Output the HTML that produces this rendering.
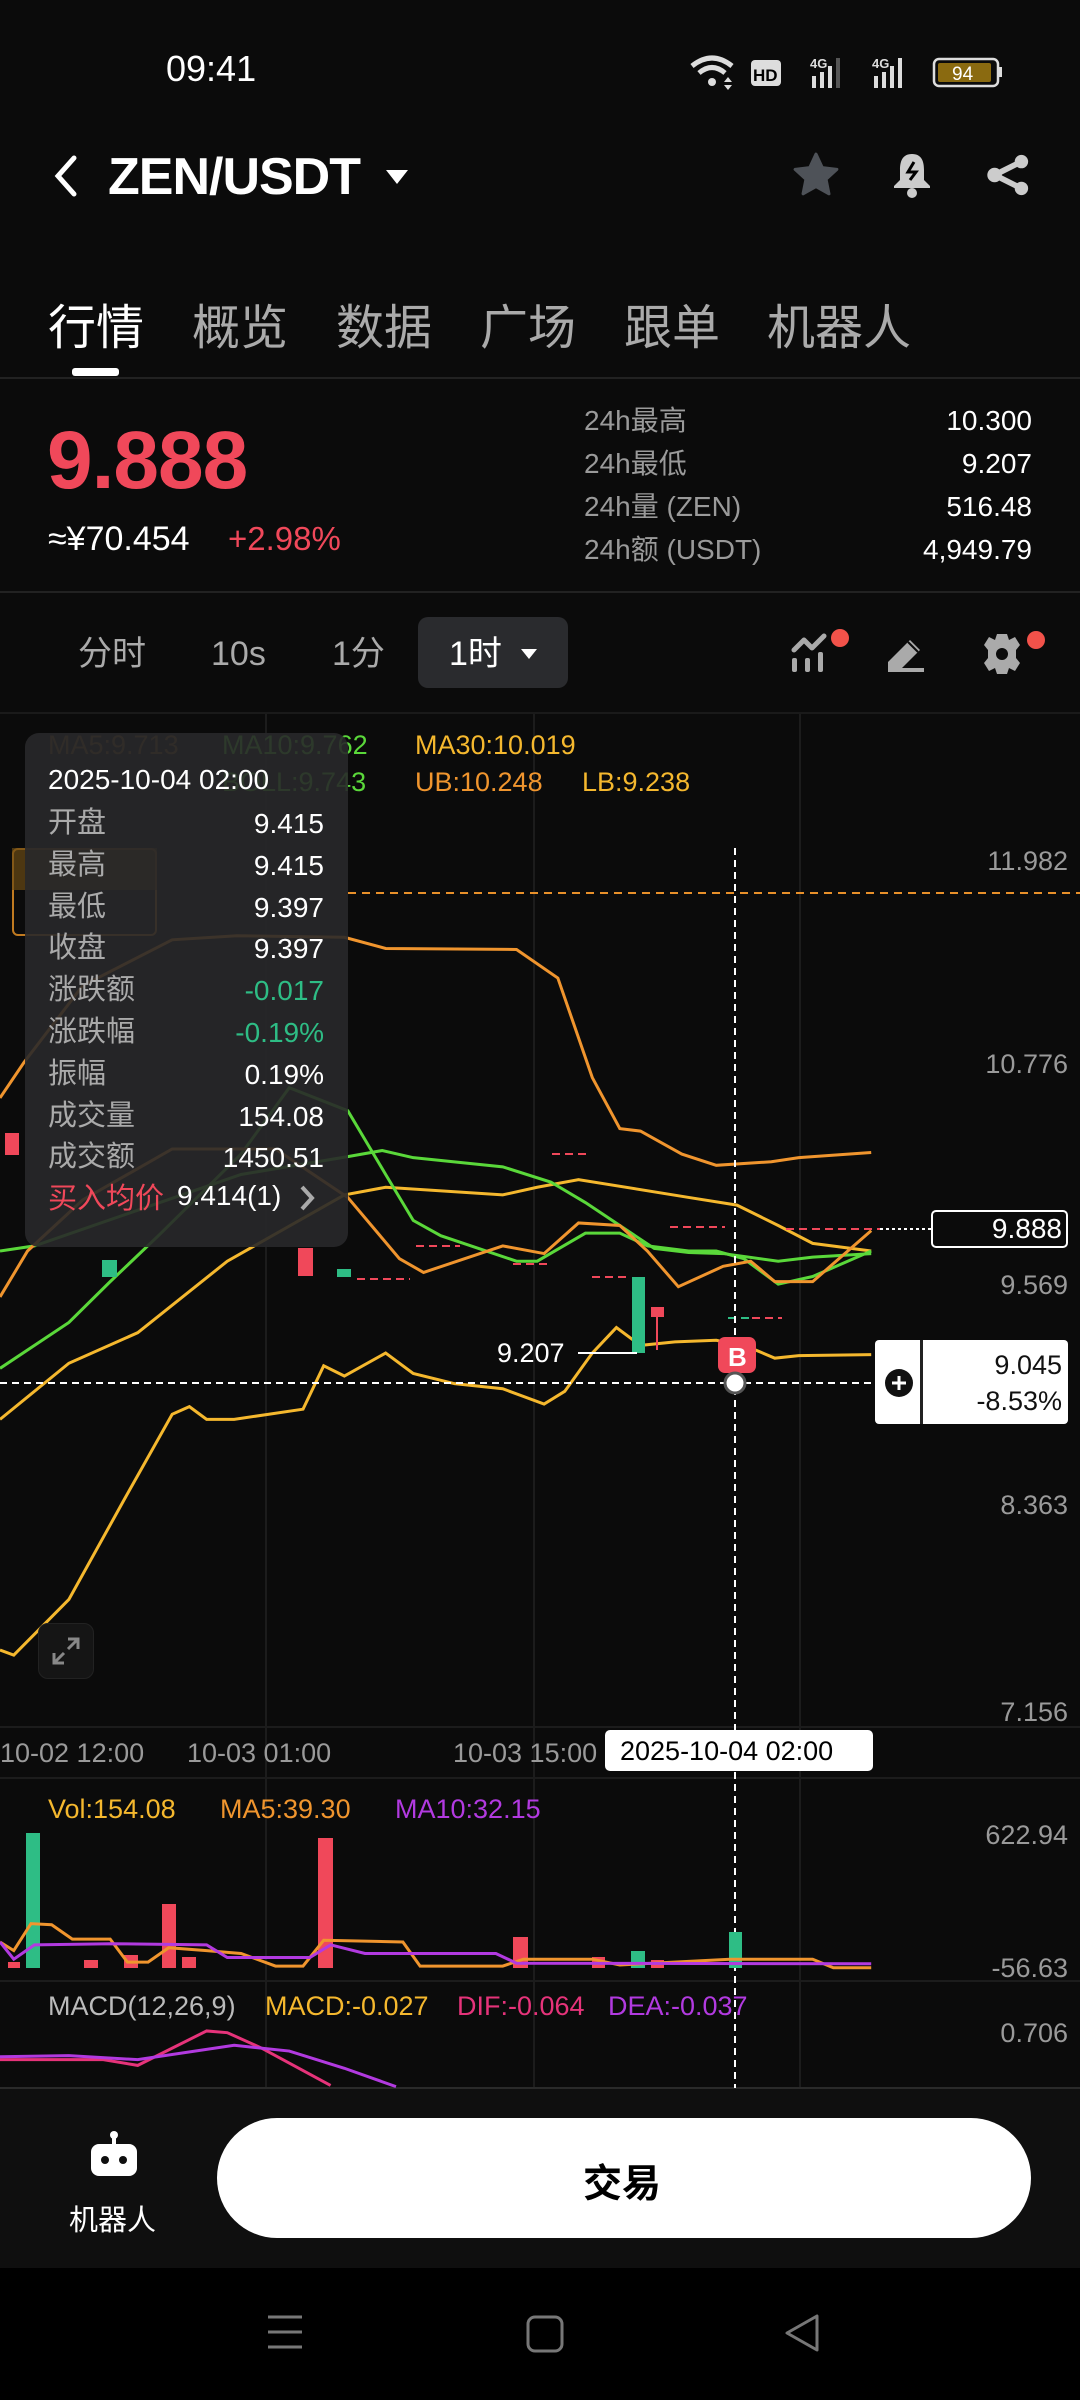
<!DOCTYPE html>
<html><head><meta charset="utf-8"><style>
*{margin:0;padding:0;box-sizing:border-box}
body{width:1080px;height:2400px;background:#0b0b0b;color:#fff;font-family:"Liberation Sans","Noto Sans CJK SC",sans-serif;position:relative;overflow:hidden}
.a{position:absolute;white-space:nowrap}
.g{color:#9a9a9a}
.r{text-align:right}
.tf{top:630px;font-size:34px;line-height:48px;height:48px}
</style></head><body>
<!-- status -->
<div class="a" style="left:166px;top:48px;font-size:36px;">09:41</div>
<svg class="a" style="left:690px;top:50px" width="320" height="44" viewBox="0 0 320 40">
<path d="M2 14 Q22 -2 42 14" stroke="#ddd" stroke-width="5" fill="none"/><path d="M9 21 Q22 10 35 21" stroke="#ddd" stroke-width="5" fill="none"/><circle cx="22" cy="30" r="4" fill="#ddd"/>
<path d="M34 30 l4 -5 l4 5z M34 33 l4 5 l4 -5z" fill="#ddd"/>
<rect x="61" y="8" width="30" height="26" rx="4" fill="#ddd"/><text x="63" y="29" font-size="17" font-weight="bold" fill="#000" font-family="Liberation Sans">HD</text>
<text x="120" y="16" font-size="13" fill="#ddd" font-family="Liberation Sans" font-weight="bold">4G</text>
<rect x="122" y="24" width="4" height="12" fill="#ddd"/><rect x="130" y="20" width="4" height="16" fill="#ddd"/><rect x="138" y="14" width="4" height="22" fill="#ddd"/><rect x="146" y="6" width="4" height="30" fill="#555"/>
<text x="182" y="16" font-size="13" fill="#ddd" font-family="Liberation Sans" font-weight="bold">4G</text>
<rect x="184" y="24" width="4" height="12" fill="#ddd"/><rect x="192" y="20" width="4" height="16" fill="#ddd"/><rect x="200" y="14" width="4" height="22" fill="#ddd"/><rect x="208" y="6" width="4" height="30" fill="#ddd"/>
<rect x="244" y="7" width="64" height="27" rx="5" fill="none" stroke="#ddd" stroke-width="2.5"/><rect x="248" y="11" width="53" height="19" rx="2" fill="#8a6a10"/><rect x="309" y="15" width="3" height="10" fill="#ddd"/>
<text x="262" y="28" font-size="19" fill="#fff" font-family="Liberation Sans">94</text>
</svg>
<!-- header -->
<svg class="a" style="left:52px;top:154px" width="30" height="44"><path d="M22 4 L6 22 L22 40" stroke="#fff" stroke-width="5" fill="none" stroke-linecap="round"/></svg>
<div class="a" style="left:108px;top:147px;font-size:52px;font-weight:bold;letter-spacing:-1px">ZEN/USDT</div>
<svg class="a" style="left:385px;top:168px" width="24" height="18"><path d="M1 2 H23 L12 16Z" fill="#fff"/></svg>
<svg class="a" style="left:790px;top:150px" width="52" height="50" viewBox="0 0 24 24"><path d="M12 2 L15 8.5 L22 9.3 L16.8 14 L18.2 21 L12 17.5 L5.8 21 L7.2 14 L2 9.3 L9 8.5Z" fill="#4e5258" stroke="#4e5258" stroke-width="1.5" stroke-linejoin="round"/></svg>
<svg class="a" style="left:888px;top:150px" width="48" height="50" viewBox="0 0 24 25"><path d="M12 2 C7 2 6 6 6 10 V15 L3 18 V19 H21 V18 L18 15 V10 C18 6 17 2 12 2Z" fill="#ccc"/><circle cx="12" cy="21.5" r="2.5" fill="#ccc"/><path d="M13 6 L10 11 H14 L11 15" stroke="#000" stroke-width="1.5" fill="none"/></svg>
<svg class="a" style="left:985px;top:152px" width="46" height="46" viewBox="0 0 24 24"><circle cx="19" cy="5" r="3.5" fill="#ccc"/><circle cx="19" cy="19" r="3.5" fill="#ccc"/><circle cx="5" cy="12" r="3.8" fill="#ccc"/><path d="M19 5 L5 12 L19 19" stroke="#ccc" stroke-width="3" fill="none"/></svg>
<!-- tabs -->
<div class="a" style="left:48px;top:288px;font-size:48px;">行情</div>
<div class="a g" style="left:192px;top:288px;font-size:48px;color:#aaa">概览</div>
<div class="a g" style="left:336px;top:288px;font-size:48px;color:#aaa">数据</div>
<div class="a g" style="left:480px;top:288px;font-size:48px;color:#aaa">广场</div>
<div class="a g" style="left:624px;top:288px;font-size:48px;color:#aaa">跟单</div>
<div class="a g" style="left:767px;top:288px;font-size:48px;color:#aaa">机器人</div>
<div class="a" style="left:72px;top:368px;width:47px;height:8px;border-radius:3px;background:#fff"></div>
<div class="a" style="left:0;top:377px;width:1080px;height:2px;background:#222"></div>
<!-- price -->
<div class="a" style="left:47px;top:414px;font-size:82px;font-weight:bold;color:#f0485a;letter-spacing:-1px">9.888</div>
<div class="a" style="left:48px;top:520px;font-size:34px;">≈¥70.454</div>
<div class="a" style="left:228px;top:520px;font-size:33px;color:#f0485a">+2.98%</div>
<div class="a g" style="left:584px;top:399px;font-size:28px;line-height:43px">24h最高<br>24h最低<br>24h量 (ZEN)<br>24h额 (USDT)</div>
<div class="a r" style="right:48px;top:399px;font-size:28px;line-height:43px">10.300<br>9.207<br>516.48<br>4,949.79</div>
<div class="a" style="left:0;top:591px;width:1080px;height:2px;background:#222"></div>
<!-- timeframe -->
<div class="a g tf" style="left:78px;color:#aaa">分时</div>
<div class="a g tf" style="left:211px;color:#aaa">10s</div>
<div class="a g tf" style="left:332px;color:#aaa">1分</div>
<div class="a" style="left:418px;top:617px;width:150px;height:71px;border-radius:10px;background:#2a2b2e"></div>
<div class="a tf" style="left:449px;">1时</div>
<svg class="a" style="left:520px;top:647px" width="18" height="14"><path d="M1 2 H17 L9 12Z" fill="#fff"/></svg>
<svg class="a" style="left:790px;top:628px" width="60" height="48"><path d="M4 22 L14 12 L22 20 L34 8" stroke="#aaa" stroke-width="5" fill="none" stroke-linecap="round" stroke-linejoin="round"/><rect x="2" y="30" width="5" height="14" rx="2" fill="#aaa"/><rect x="15" y="30" width="5" height="14" rx="2" fill="#aaa"/><rect x="28" y="24" width="5" height="20" rx="2" fill="#aaa"/><circle cx="50" cy="10" r="9" fill="#f2524a"/></svg>
<svg class="a" style="left:886px;top:634px" width="40" height="40"><path d="M2 38 V28 L24 6 L34 16 L16 34 H38 V38Z" fill="#aaa"/><path d="M22 8 L32 18" stroke="#0b0b0b" stroke-width="2"/></svg>
<svg class="a" style="left:980px;top:628px" width="70" height="48" viewBox="0 0 70 48"><g transform="translate(22,26)"><path d="M-5 -20 H5 L7 -14 L13 -17 L18 -9 L14 -4 V4 L18 9 L13 17 L7 14 L5 20 H-5 L-7 14 L-13 17 L-18 9 L-14 4 V-4 L-18 -9 L-13 -17 L-7 -14Z" fill="#aaa"/><circle r="6" fill="#0b0b0b"/></g><circle cx="56" cy="12" r="9" fill="#f2524a"/></svg>
<div class="a" style="left:0;top:712px;width:1080px;height:2px;background:#1a1a1a"></div>
<!-- chart -->
<svg class="a" style="left:0;top:0" width="1080" height="2100">
<g stroke="#1c1c1c" stroke-width="2">
<line x1="266" y1="714" x2="266" y2="2088"/><line x1="534" y1="714" x2="534" y2="2088"/><line x1="800" y1="714" x2="800" y2="2088"/>
<line x1="0" y1="1727" x2="1080" y2="1727"/><line x1="0" y1="1778" x2="1080" y2="1778"/><line x1="0" y1="1981" x2="1080" y2="1981"/><line x1="0" y1="2088" x2="1080" y2="2088" stroke="#2a2a2a"/>
</g>
<line x1="348" y1="893" x2="1080" y2="893" stroke="#e8902a" stroke-width="2" stroke-dasharray="8,6"/>
<g transform="translate(0,700) scale(0.6887,0.5102)" fill="none" stroke-width="3">
<polyline vector-effect="non-scaling-stroke" stroke="#f0952e" points="0,780 35,710 120,560 250,470 344,462 500,465 560,487 750,489 810,545 860,740 900,840 930,845 990,890 1040,912 1120,905 1160,897 1265,887"/>
<polyline vector-effect="non-scaling-stroke" stroke="#f5b82e" points="0,1410 100,1300 200,1240 330,1100 500,970 560,955 730,970 780,955 840,940 1000,975 1070,990 1130,1030 1180,1065 1265,1080"/>
<polyline vector-effect="non-scaling-stroke" stroke="#f5b82e" points="0,1862 20,1872 100,1763 180,1568 250,1400 275,1385 300,1410 340,1410 440,1390 470,1305 500,1325 560,1280 600,1320 660,1340 730,1350 790,1380 820,1355 860,1280 895,1230 930,1265 980,1258 1040,1255 1090,1270 1125,1290 1160,1285 1265,1283"/>
<polyline vector-effect="non-scaling-stroke" stroke="#5ad83a" points="0,1310 100,1220 160,1140 230,1050 350,890 420,760 505,805 560,930 600,1020 640,1050 750,1100 780,1100 850,1045 900,1045 940,1070 1000,1080 1040,1080 1080,1095 1130,1145 1180,1130 1265,1080"/>
<polyline vector-effect="non-scaling-stroke" stroke="#5ad83a" points="0,1080 50,1070 200,1000 350,930 505,895 555,883 600,897 730,915 800,945 850,985 900,1030 950,1075 1000,1083 1050,1085 1130,1100 1180,1092 1265,1085"/>
<polyline vector-effect="non-scaling-stroke" stroke="#f0952e" points="0,1170 40,1080 120,980 250,880 400,880 505,975 580,1095 615,1122 730,1070 790,1085 840,1025 900,1030 940,1080 985,1150 1050,1110 1090,1100 1125,1140 1180,1140 1265,1040"/>
</g>
<g>
<rect x="5" y="1133" width="14" height="22" fill="#f0485a"/>
<rect x="102" y="1260" width="15" height="17" fill="#2ebd85"/>
<rect x="298" y="1248" width="15" height="28" fill="#f0485a"/>
<rect x="337" y="1269" width="14" height="8" fill="#2ebd85"/>
<line x1="639" y1="1277" x2="639" y2="1353" stroke="#2ebd85" stroke-width="2"/>
<rect x="632" y="1277" width="13" height="76" fill="#2ebd85"/>
<line x1="657" y1="1307" x2="657" y2="1350" stroke="#f0485a" stroke-width="2"/>
<rect x="651" y="1307" width="13" height="10" fill="#f0485a"/>
<g stroke="#f0485a" stroke-width="2" stroke-dasharray="8,5">
<line x1="552" y1="1154" x2="587" y2="1154"/><line x1="357" y1="1279" x2="410" y2="1279"/><line x1="513" y1="1264" x2="550" y2="1264"/><line x1="592" y1="1277" x2="627" y2="1277"/><line x1="670" y1="1227" x2="725" y2="1227"/><line x1="786" y1="1229" x2="880" y2="1229"/><line x1="752" y1="1318" x2="782" y2="1318"/><line x1="416" y1="1246" x2="460" y2="1246"/>
</g>
<line x1="728" y1="1318" x2="752" y2="1318" stroke="#2ebd85" stroke-width="2" stroke-dasharray="8,5"/>
<line x1="880" y1="1229" x2="931" y2="1229" stroke="#fff" stroke-width="2" stroke-dasharray="3,3"/>
</g>
<line x1="735" y1="848" x2="735" y2="2088" stroke="#fff" stroke-width="2" stroke-dasharray="7,5"/>
<line x1="0" y1="1383" x2="875" y2="1383" stroke="#fff" stroke-width="2" stroke-dasharray="7,5"/>
<line x1="578" y1="1353" x2="637" y2="1353" stroke="#fff" stroke-width="2"/>
<rect x="718" y="1337" width="38" height="36" rx="7" fill="#f0485a"/>
<text x="728" y="1366" font-size="26" fill="#fff" font-family="Liberation Sans" font-weight="bold">B</text>
<circle cx="735" cy="1383" r="10" fill="#fff" stroke="#555" stroke-width="3"/>
<!-- volume -->
<g fill="#f0485a"><rect x="162" y="1904" width="14" height="64"/><rect x="318" y="1838" width="15" height="130"/><rect x="513" y="1937" width="15" height="31"/><rect x="84" y="1960" width="14" height="8"/><rect x="124" y="1955" width="14" height="13"/><rect x="182" y="1957" width="14" height="11"/><rect x="592" y="1957" width="13" height="11"/><rect x="8" y="1962" width="12" height="6"/><rect x="651" y="1960" width="13" height="8"/></g>
<g fill="#2ebd85"><rect x="26" y="1833" width="14" height="135"/><rect x="631" y="1951" width="14" height="17"/><rect x="729" y="1932" width="13" height="36"/></g>
<g transform="translate(0,1500) scale(0.6887,0.574)" fill="none">
<polyline vector-effect="non-scaling-stroke" stroke="#f0952e" stroke-width="3" points="0,770 20,785 45,738 75,740 105,765 160,765 185,805 215,805 245,780 300,785 350,790 400,812 440,812 470,767 585,770 610,812 730,812 760,800 860,800 900,810 1060,800 1180,800 1210,815 1265,815"/>
<polyline vector-effect="non-scaling-stroke" stroke="#b23ae0" stroke-width="3" points="0,770 20,800 50,775 160,773 300,775 330,797 450,797 480,775 530,790 720,790 750,807 1265,808"/>
<polyline vector-effect="non-scaling-stroke" stroke="#e6337a" stroke-width="3" points="0,975 150,975 200,985 300,925 330,928 380,955 480,1020"/>
<polyline vector-effect="non-scaling-stroke" stroke="#b23ae0" stroke-width="3" points="0,970 100,968 200,975 340,950 420,960 500,990 575,1022"/>
</g>
</svg>
<!-- legends -->
<div class="a" style="left:48px;top:730px;font-size:27px;color:#f0952e;opacity:.5">MA5:9.713</div>
<div class="a" style="left:222px;top:730px;font-size:27px;color:#5ad83a">MA10:9.762</div>
<div class="a" style="left:415px;top:730px;font-size:27px;color:#f5b82e">MA30:10.019</div>
<div class="a" style="left:222px;top:767px;font-size:27px;color:#5ad83a">BOLL:9.743</div>
<div class="a" style="left:415px;top:767px;font-size:27px;color:#f0952e">UB:10.248</div>
<div class="a" style="left:582px;top:767px;font-size:27px;color:#f5b82e">LB:9.238</div>
<div class="a" style="left:12px;top:848px;width:145px;height:88px;border:2px solid #c07a20;border-radius:6px;"></div>
<div class="a" style="left:12px;top:848px;width:145px;height:42px;background:#6a4a14;opacity:.7"></div>
<!-- tooltip -->
<div class="a" style="left:25px;top:733px;width:323px;height:514px;border-radius:14px;background:rgba(40,40,42,0.9)"></div>
<div class="a" style="left:48px;top:764px;font-size:28px;">2025-10-04 02:00</div>
<div class="a" style="left:48px;top:803px;font-size:29px;line-height:41.8px;color:#aaa">开盘<br>最高<br>最低<br>收盘<br>涨跌额<br>涨跌幅<br>振幅<br>成交量<br>成交额<br><span style="color:#f0485a">买入均价</span></div>
<div class="a r" style="right:756px;top:803px;font-size:28px;line-height:41.8px;">9.415<br>9.415<br>9.397<br>9.397<br><span style="color:#2ebd85">-0.017</span><br><span style="color:#2ebd85">-0.19%</span><br>0.19%<br>154.08<br>1450.51</div>
<div class="a" style="left:177px;top:1180px;font-size:28px;">9.414(1)</div>
<svg class="a" style="left:298px;top:1183px" width="18" height="30"><path d="M4 4 L14 15 L4 26" stroke="#aaa" stroke-width="4" fill="none"/></svg>
<!-- axis labels -->
<div class="a r g" style="right:12px;top:846px;font-size:27px;">11.982</div>
<div class="a r g" style="right:12px;top:1049px;font-size:27px;">10.776</div>
<div class="a r g" style="right:12px;top:1270px;font-size:27px;">9.569</div>
<div class="a r g" style="right:12px;top:1490px;font-size:27px;">8.363</div>
<div class="a r g" style="right:12px;top:1697px;font-size:27px;">7.156</div>
<div class="a" style="left:931px;top:1210px;width:137px;height:38px;border:2px solid #fff;border-radius:5px;background:#0b0b0b"></div>
<div class="a r" style="right:18px;top:1213px;font-size:28px;">9.888</div>
<div class="a" style="left:875px;top:1340px;width:193px;height:84px;background:#fff;border-radius:4px"></div>
<div class="a" style="left:920px;top:1340px;width:3px;height:84px;background:#222"></div>
<svg class="a" style="left:884px;top:1368px" width="30" height="30"><circle cx="15" cy="15" r="14" fill="#111"/><path d="M15 8 V22 M8 15 H22" stroke="#fff" stroke-width="3"/></svg>
<div class="a r" style="right:18px;top:1347px;font-size:27px;color:#111;line-height:36px">9.045<br>-8.53%</div>
<div class="a" style="left:497px;top:1338px;font-size:27px;">9.207</div>
<div class="a" style="left:38px;top:1623px;width:56px;height:56px;border-radius:10px;background:#151515;border:1px solid #222"></div>
<svg class="a" style="left:50px;top:1635px" width="32" height="32"><path d="M18 4 H28 V14 M28 4 L18 14 M14 28 H4 V18 M4 28 L14 18" stroke="#888" stroke-width="3" fill="none"/></svg>
<!-- time axis -->
<div class="a g" style="left:0;top:1738px;font-size:27px;">10-02 12:00</div>
<div class="a g" style="left:187px;top:1738px;font-size:27px;">10-03 01:00</div>
<div class="a g" style="left:453px;top:1738px;font-size:27px;">10-03 15:00</div>
<div class="a" style="left:605px;top:1730px;width:268px;height:41px;background:#fff;border-radius:5px"></div>
<div class="a" style="left:620px;top:1736px;font-size:27px;color:#000">2025-10-04 02:00</div>
<div class="a" style="left:48px;top:1794px;font-size:27px;color:#f5b82e">Vol:154.08</div>
<div class="a" style="left:220px;top:1794px;font-size:27px;color:#f0952e">MA5:39.30</div>
<div class="a" style="left:395px;top:1794px;font-size:27px;color:#b23ae0">MA10:32.15</div>
<div class="a r g" style="right:12px;top:1820px;font-size:27px;">622.94</div>
<div class="a r g" style="right:12px;top:1953px;font-size:27px;">-56.63</div>
<div class="a" style="left:48px;top:1991px;font-size:27px;color:#bbb">MACD(12,26,9)</div>
<div class="a" style="left:265px;top:1991px;font-size:27px;color:#f5b82e">MACD:-0.027</div>
<div class="a" style="left:457px;top:1991px;font-size:27px;color:#e6337a">DIF:-0.064</div>
<div class="a" style="left:608px;top:1991px;font-size:27px;color:#b23ae0">DEA:-0.037</div>
<div class="a r g" style="right:12px;top:2018px;font-size:27px;">0.706</div>
<!-- bottom bar -->
<div class="a" style="left:0;top:2089px;width:1080px;height:179px;background:#0f0f0f"></div>
<svg class="a" style="left:88px;top:2130px" width="52" height="52" viewBox="0 0 52 52"><circle cx="26" cy="5" r="4" fill="#fff"/><rect x="24" y="6" width="4" height="8" fill="#fff"/><rect x="3" y="14" width="46" height="32" rx="8" fill="#fff"/><circle cx="17" cy="30" r="4" fill="#0f0f0f"/><circle cx="35" cy="30" r="4" fill="#0f0f0f"/></svg>
<div class="a" style="left:69px;top:2197px;font-size:29px;">机器人</div>
<div class="a" style="left:217px;top:2118px;width:814px;height:120px;border-radius:60px;background:#fff"></div>
<div class="a" style="left:583px;top:2153px;font-size:39px;font-weight:bold;color:#000">交易</div>
<!-- nav -->
<div class="a" style="left:0;top:2268px;width:1080px;height:132px;background:#000"></div>
<svg class="a" style="left:265px;top:2312px" width="40" height="40"><path d="M3 5 H37 M3 20 H37 M3 35 H37" stroke="#777" stroke-width="3"/></svg>
<svg class="a" style="left:525px;top:2314px" width="40" height="40"><rect x="3" y="3" width="34" height="34" rx="7" stroke="#777" stroke-width="3" fill="none"/></svg>
<svg class="a" style="left:782px;top:2312px" width="40" height="44"><path d="M35 4 V38 L5 21Z" stroke="#777" stroke-width="3" fill="none" stroke-linejoin="round"/></svg>
</body></html>
